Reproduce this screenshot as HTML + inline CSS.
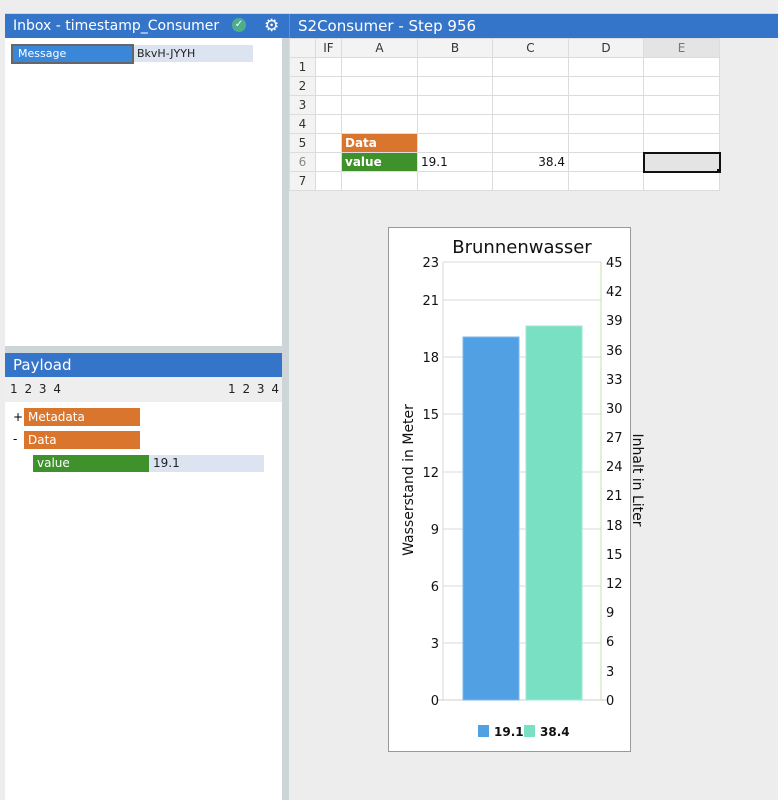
<!DOCTYPE html>
<html><head><meta charset="utf-8"><style>
*{margin:0;padding:0;box-sizing:border-box}
body{width:778px;height:800px;background:#ededed;font-family:"DejaVu Sans","Liberation Sans",sans-serif;position:relative;overflow:hidden}
.a{position:absolute}
.bar{background:#3575c9;color:#fff;font-size:15px;line-height:24px;padding-left:8px}
table{border-collapse:collapse;position:absolute;left:289px;top:38px;font-size:12px}
td{border:1px solid #dcdcdc;height:19px;background:#fff;padding:0 3px;color:#111}
tr:first-child td{background:#f3f3f3;text-align:center;color:#333}
td.h{background:#f3f3f3;text-align:center;color:#333}
</style></head><body>
<div class="a" style="left:5px;top:13px;width:773px;height:1px;background:#c8d8ee"></div>
<div class="a bar" style="left:5px;top:14px;width:277px;height:24px;font-size:14px">Inbox - timestamp_Consumer</div>
<div class="a" style="left:232px;top:18px;width:14px;height:14px;border-radius:50%;background:#4fae8a;color:#fff;font-size:10px;line-height:14px;text-align:center">✓</div>
<div class="a" style="left:264px;top:14px;color:#fff;font-size:17px;line-height:24px">⚙</div>
<div class="a" style="left:282px;top:14px;width:7px;height:24px;background:#3575c9"></div>
<div class="a bar" style="left:289px;top:14px;width:489px;height:24px;border-left:1px solid #5a8ed6">S2Consumer - Step 956</div>
<div class="a" style="left:5px;top:38px;width:277px;height:308px;background:#fff"></div>
<div class="a" style="left:11px;top:44px;width:123px;height:20px;background:#3a86d8;border:2px solid #666;color:#fff;font-size:11px;line-height:16px;padding-left:5px">Message</div>
<div class="a" style="left:134px;top:45px;width:119px;height:17px;background:#dce3f1;font-size:11px;line-height:17px;padding-left:3px;color:#222">BkvH-JYYH</div>
<div class="a" style="left:5px;top:346px;width:277px;height:7px;background:#cdd5d9"></div>
<div class="a bar" style="left:5px;top:353px;width:277px;height:24px">Payload</div>
<div class="a" style="left:5px;top:377px;width:277px;height:25px;background:#eee;font-size:12px;line-height:25px;color:#222;word-spacing:3px"><span style="position:absolute;left:5px">1 2 3 4</span><span style="position:absolute;right:3px">1 2 3 4</span></div>
<div class="a" style="left:5px;top:402px;width:277px;height:398px;background:#fff"></div>
<div class="a" style="left:13px;top:410px;font-size:12px">+</div>
<div class="a" style="left:24px;top:408px;width:116px;height:18px;background:#d9752d;color:#fff;font-size:12px;line-height:18px;padding-left:4px">Metadata</div>
<div class="a" style="left:13px;top:432px;font-size:12px">-</div>
<div class="a" style="left:24px;top:431px;width:116px;height:18px;background:#d9752d;color:#fff;font-size:12px;line-height:18px;padding-left:4px">Data</div>
<div class="a" style="left:33px;top:455px;width:116px;height:17px;background:#3f922b;color:#fff;font-size:12px;line-height:17px;padding-left:4px">value</div>
<div class="a" style="left:149px;top:455px;width:115px;height:17px;background:#dce3f1;font-size:12px;line-height:17px;padding-left:4px;color:#222">19.1</div>
<div class="a" style="left:282px;top:38px;width:7px;height:762px;background:#cdd5d9"></div>
<table>
<tr><td style="width:26px"></td><td style="width:26px">IF</td><td style="width:76px">A</td><td style="width:75px">B</td><td style="width:76px">C</td><td style="width:75px">D</td><td style="width:76px;background:#e4e4e4;color:#777">E</td></tr>
<tr><td class="h">1</td><td></td><td></td><td></td><td></td><td></td><td></td></tr>
<tr><td class="h">2</td><td></td><td></td><td></td><td></td><td></td><td></td></tr>
<tr><td class="h">3</td><td></td><td></td><td></td><td></td><td></td><td></td></tr>
<tr><td class="h">4</td><td></td><td></td><td></td><td></td><td></td><td></td></tr>
<tr><td class="h">5</td><td></td><td style="background:#d9752d;color:#fff;font-weight:bold">Data</td><td></td><td></td><td></td><td></td></tr>
<tr><td class="h" style="color:#888">6</td><td></td><td style="background:#3f922b;color:#fff;font-weight:bold">value</td><td>19.1</td><td style="text-align:right">38.4</td><td></td><td style="background:#e4e4e4;border:2px solid #111"></td></tr>
<tr><td class="h">7</td><td></td><td></td><td></td><td></td><td></td><td></td></tr>
</table>
<div class="a" style="left:717px;top:169px;width:4px;height:4px;background:#111"></div>
<svg class="a" style="left:0;top:0" width="778" height="800" font-family="DejaVu Sans, Liberation Sans, sans-serif">
<rect x="388.5" y="227.5" width="242" height="524" fill="#fff" stroke="#999"/>
<text x="522" y="253" font-size="18" text-anchor="middle" fill="#111">Brunnenwasser</text>
<g stroke="#d8d8d8">
<line x1="443" x2="601" y1="262" y2="262"/><line x1="443" x2="601" y1="300" y2="300"/><line x1="443" x2="601" y1="357" y2="357"/><line x1="443" x2="601" y1="414" y2="414"/><line x1="443" x2="601" y1="472" y2="472"/><line x1="443" x2="601" y1="529" y2="529"/><line x1="443" x2="601" y1="586" y2="586"/><line x1="443" x2="601" y1="643" y2="643"/>
<line x1="443" x2="443" y1="262" y2="700"/>
</g>
<line x1="601" x2="601" y1="262" y2="700" stroke="#c8e0a8"/>
<line x1="437" x2="607" y1="700" y2="700" stroke="#ccc"/>
<rect x="463" y="337" width="56" height="363" fill="#51a0e3" stroke="#7ab8ee"/>
<rect x="526" y="326" width="56" height="374" fill="#79e0c4" stroke="#9de8d2"/>
<g font-size="13" fill="#111" text-anchor="end">
<text x="439" y="267">23</text><text x="439" y="305">21</text><text x="439" y="362">18</text><text x="439" y="419">15</text><text x="439" y="477">12</text><text x="439" y="534">9</text><text x="439" y="591">6</text><text x="439" y="648">3</text><text x="439" y="705">0</text>
</g>
<g font-size="13" fill="#111">
<text x="606" y="267">45</text><text x="606" y="296">42</text><text x="606" y="325">39</text><text x="606" y="355">36</text><text x="606" y="384">33</text><text x="606" y="413">30</text><text x="606" y="442">27</text><text x="606" y="471">24</text><text x="606" y="500">21</text><text x="606" y="530">18</text><text x="606" y="559">15</text><text x="606" y="588">12</text><text x="606" y="617">9</text><text x="606" y="646">6</text><text x="606" y="676">3</text><text x="606" y="705">0</text>
</g>
<text transform="translate(413,480) rotate(-90)" font-size="14" text-anchor="middle" fill="#111">Wasserstand in Meter</text>
<text transform="translate(633,480) rotate(90)" font-size="14" text-anchor="middle" fill="#111">Inhalt in Liter</text>
<rect x="478" y="725" width="11" height="12" fill="#51a0e3"/>
<text x="494" y="736" font-size="12" font-weight="bold" fill="#111">19.1</text>
<rect x="524" y="725" width="11" height="12" fill="#79e0c4"/>
<text x="540" y="736" font-size="12" font-weight="bold" fill="#111">38.4</text>
</svg>
</body></html>
